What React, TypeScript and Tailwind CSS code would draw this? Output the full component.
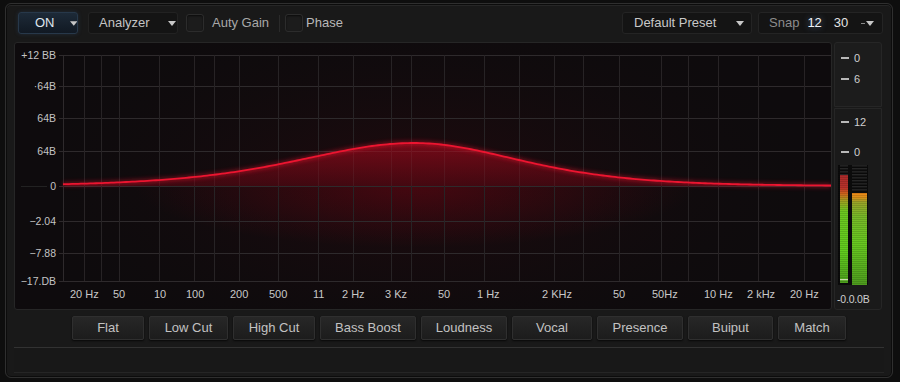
import React from "react";

const FONT = { fontFamily: '"Liberation Sans", Arial, sans-serif' };

function curveY(x: number): number {
  const d = x - 399;
  const w = d < 0 ? 155 : 142;
  const s = 1 / Math.cosh(d / w);
  return 143 - 43 * s * s;
}
function buildCurve(): string {
  let d = "";
  for (let x = 48; x <= 816; x += 3) {
    d += `${x === 48 ? "M" : " L"} ${x} ${curveY(x).toFixed(2)}`;
  }
  d += ` L 816 ${curveY(816).toFixed(2)}`;
  return d;
}
const curveD = buildCurve();
const fillD = `${curveD} L 816 143 L 48 143 Z`;

const hLines = [12, 43, 75, 108, 143, 178, 210, 238];
const yLabels = ["+12 BB", "·64B", "64B", "64B", "0", "−2.04", "−7.88", "−17.DB"];
const vLines = [69, 86, 104, 144, 179, 199, 224, 263, 303, 338, 376, 396, 429, 469, 504, 539, 568, 604, 646, 673, 703, 743, 789];
const fLabels: [string, number][] = [
  ["20 Hz", 55], ["50", 98], ["10", 139], ["100", 171], ["200", 215], ["500", 254],
  ["11", 298], ["2 Hz", 327], ["3 Kz", 370], ["50", 423], ["1 Hz", 462], ["2 KHz", 527],
  ["50", 598], ["50Hz", 637], ["10 Hz", 689], ["2 kHz", 732], ["20 Hz", 775],
];

function Caret({ className = "" }: { className?: string }) {
  return (
    <svg width="8" height="5" viewBox="0 0 8 5" className={className}>
      <path d="M0 0 L8 0 L4 5 Z" fill="#c8c8c8" />
    </svg>
  );
}

function Checkbox() {
  return <div className="w-[18px] h-[18px] rounded-[3px] bg-[#1c1c1c] border border-[#2c2c2c] shadow-[inset_0_1px_2px_rgba(0,0,0,0.6)]" />;
}

function Graph() {
  return (
    <div className="relative w-[818px] h-[268px] rounded-[3px] border border-[#262626] bg-[#0e0b0d] overflow-hidden">
      <svg width="818" height="268" className="absolute left-0 top-0">
        <defs>
          <radialGradient id="bgGlow" cx="400" cy="140" r="420" gradientUnits="userSpaceOnUse" gradientTransform="translate(400 140) scale(1 0.45) translate(-400 -140)">
            <stop offset="0" stopColor="#34090f" stopOpacity="0.5" />
            <stop offset="1" stopColor="#0e0b0d" stopOpacity="0" />
          </radialGradient>
          <linearGradient id="fillG" x1="0" y1="100" x2="0" y2="143" gradientUnits="userSpaceOnUse">
            <stop offset="0" stopColor="#c00a20" stopOpacity="0.55" />
            <stop offset="1" stopColor="#700614" stopOpacity="0.45" />
          </linearGradient>
          <radialGradient id="underGlow" cx="400" cy="143" r="280" gradientUnits="userSpaceOnUse" gradientTransform="translate(400 143) scale(1 0.22) translate(-400 -143)">
            <stop offset="0" stopColor="#6a0512" stopOpacity="0.5" />
            <stop offset="1" stopColor="#6a0512" stopOpacity="0" />
          </radialGradient>
          <filter id="blur" x="-10%" y="-50%" width="120%" height="200%">
            <feGaussianBlur stdDeviation="2" />
          </filter>
        </defs>
        <rect x="48" y="0" width="768" height="268" fill="url(#bgGlow)" />
        <rect x="48" y="143" width="768" height="70" fill="url(#underGlow)" />
        {hLines.map((y) => (
          <line key={y} x1="44" x2="816" y1={y + 0.5} y2={y + 0.5} stroke="#2e2a2c" strokeWidth="1" />
        ))}
        <line x1="6" x2="32" y1="143.5" y2="143.5" stroke="#222" strokeWidth="1" />
        {vLines.map((x) => (
          <line key={x} x1={x + 0.5} x2={x + 0.5} y1="12" y2="238" stroke="#272325" strokeWidth="1" />
        ))}
        <line x1="48.5" x2="48.5" y1="12" y2="238" stroke="#2e2a2c" strokeWidth="1" />
        <line x1="816.5" x2="816.5" y1="0" y2="268" stroke="#2f2f2f" strokeWidth="1" />
        <path d={fillD} fill="url(#fillG)" />
        <path d={curveD} fill="none" stroke="#ff1430" strokeWidth="4" opacity="0.4" filter="url(#blur)" />
        <path d={curveD} fill="none" stroke="#ec1530" strokeWidth="1.8" />
      </svg>
      {yLabels.map((t, i) => (
        <div key={i} className="absolute left-0 w-[41px] text-right text-[10.5px] leading-[14px] text-[#c4c4c4]" style={{ top: hLines[i] - 7 }}>
          {t}
        </div>
      ))}
      {fLabels.map(([t, x], i) => (
        <div key={i} className="absolute top-[244px] text-[11px] leading-[14px] text-[#c8c8c8] whitespace-nowrap" style={{ left: x }}>
          {t}
        </div>
      ))}
    </div>
  );
}

function Tick({ label }: { label: string }) {
  return (
    <div className="h-[14px] flex items-center pl-[6px] gap-[5px]">
      <div className="w-[8px] h-[2px] bg-[#b8b8b8]" />
      <span className="text-[11px] leading-[14px] text-[#cfcfcf]">{label}</span>
    </div>
  );
}

function Meter() {
  const stripes = [];
  for (let y = 0; y < 120; y += 2) stripes.push(y);
  return (
    <svg width="30" height="120" viewBox="0 0 30 120">
      <defs>
        <linearGradient id="mL" x1="0" y1="10" x2="0" y2="118" gradientUnits="userSpaceOnUse">
          <stop offset="0" stopColor="#a82a2a" />
          <stop offset="0.12" stopColor="#b8322a" />
          <stop offset="0.17" stopColor="#d0621c" />
          <stop offset="0.24" stopColor="#a0a020" />
          <stop offset="0.34" stopColor="#6cc820" />
          <stop offset="0.7" stopColor="#62cc1e" />
          <stop offset="1" stopColor="#4c9e1c" />
        </linearGradient>
        <linearGradient id="mR" x1="0" y1="28" x2="0" y2="120" gradientUnits="userSpaceOnUse">
          <stop offset="0" stopColor="#f08a18" />
          <stop offset="0.05" stopColor="#d8901a" />
          <stop offset="0.1" stopColor="#9aa428" />
          <stop offset="0.25" stopColor="#78b828" />
          <stop offset="0.55" stopColor="#68c820" />
          <stop offset="1" stopColor="#4e9c1e" />
        </linearGradient>
      </defs>
      <rect x="0" y="0" width="30" height="120" fill="#0b0b0b" />
      {[0, 3, 6, 9, 12, 15, 18, 21, 24].map((y) => (
        <g key={y}>
          <rect x="2" y={y} width="8" height="1.5" fill="#262626" />
          <rect x="14" y={y} width="15" height="1.5" fill="#262626" />
        </g>
      ))}
      <rect x="2" y="10" width="8" height="108" fill="url(#mL)" />
      <rect x="14" y="28" width="15" height="92" fill="url(#mR)" />
      {stripes.map((y) => (
        <rect key={y} x="0" y={y} width="30" height="0.7" fill="#000" opacity="0.18" />
      ))}
      <rect x="2" y="114" width="8" height="1.2" fill="#e8f0d0" opacity="0.8" />
      <rect x="10" y="0" width="4" height="120" fill="#0b0b0b" />
    </svg>
  );
}

function RightPanel() {
  return (
    <div className="w-[48px] h-[268px] flex flex-col gap-[1px]">
      <div className="h-[65px] rounded-t-[3px] bg-[#1c1c1c] border border-[#262626] pt-[8px] flex flex-col gap-[7px]">
        <Tick label="0" />
        <Tick label="6" />
      </div>
      <div className="flex-1 rounded-b-[3px] bg-[#1a1a1a] border border-[#262626] pt-[6px] flex flex-col">
        <Tick label="12" />
        <div className="mt-[16px]">
          <Tick label="0" />
        </div>
        <div className="mt-[6px] pl-[3px]">
          <Meter />
        </div>
        <div className="mt-[7px] text-[10.5px] leading-[14px] text-[#cfcfcf] pl-[2px] whitespace-nowrap tracking-[-0.2px]">-0.0.0B</div>
      </div>
    </div>
  );
}

const buttons: [string, number][] = [
  ["Flat", 72], ["Low Cut", 79], ["High Cut", 82], ["Bass Boost", 96], ["Loudness", 86],
  ["Vocal", 80], ["Presence", 86], ["Buiput", 85], ["Match", 68],
];

export default function App() {
  return (
    <div className="w-[900px] h-[382px] bg-[#0e0e0e] pt-[3px] pl-[5px] pr-[7px] pb-[4px]" style={FONT}>
      <div className="w-full h-full rounded-[6px] border border-[#2f2f2f] bg-[#191919] shadow-[inset_0_0_0_1px_#0c0c0c,inset_0_1px_0_1px_#262626] flex flex-col">
        {/* toolbar */}
        <div className="flex items-center h-[22px] mt-[8px] pl-[12px] pr-[9px]">
          <div className="w-[60px] h-[22px] rounded-[3px] bg-gradient-to-b from-[#1d2a38] to-[#111923] border border-[#27384a] shadow-[0_0_4px_rgba(60,100,150,0.25)] flex items-center pl-[16px] gap-[15px]">
            <span className="text-[13px] text-[#dfe6ee]">ON</span>
            <Caret />
          </div>
          <div className="ml-[10px] w-[90px] h-[22px] rounded-[3px] bg-[#141414] border border-[#222] flex items-center pl-[10px] gap-[18px]">
            <span className="text-[13px] text-[#c4c4c4]">Analyzer</span>
            <Caret />
          </div>
          <div className="ml-[8px]"><Checkbox /></div>
          <span className="ml-[8px] text-[13px] text-[#a8a8a8]">Auty Gain</span>
          <div className="ml-[10px] w-px h-[17px] bg-[#2a2a2a]" />
          <div className="ml-[5px]"><Checkbox /></div>
          <span className="ml-[3px] text-[13px] text-[#b8b8b8]">Phase</span>
          <div className="flex-1" />
          <div className="w-[130px] h-[22px] rounded-[3px] bg-[#141414] border border-[#242424] flex items-center pl-[11px] gap-[20px]">
            <span className="text-[13px] text-[#c8c8c8]">Default Preset</span>
            <Caret />
          </div>
          <div className="ml-[6px] w-[125px] h-[22px] rounded-[3px] bg-[#141414] border border-[#242424] flex items-center pl-[10px]">
            <span className="text-[13px] text-[#8c8c8c]">Snap</span>
            <span className="ml-[8px] text-[13px] text-[#eef3fa] [text-shadow:0_0_6px_rgba(120,160,220,0.7)]">12</span>
            <span className="ml-[12px] text-[13px] text-[#e4e4e4]">30</span>
            <span className="ml-[13px] w-[4px] h-[1px] bg-[#888]" />
            <Caret className="ml-[1px]" />
          </div>
        </div>
        {/* graph row */}
        <div className="flex mt-[8px] pl-[8px] gap-[2px]">
          <Graph />
          <RightPanel />
        </div>
        {/* buttons */}
        <div className="flex mt-[6px] pl-[66px] gap-[5px]">
          {buttons.map(([t, w]) => (
            <div
              key={t}
              className="h-[24px] rounded-[2px] bg-gradient-to-b from-[#272727] to-[#1c1c1c] border border-[#2f2f2f] shadow-[0_1px_2px_rgba(0,0,0,0.7)] flex items-center justify-center text-[13px] text-[#c2c2c2]"
              style={{ width: w }}
            >
              {t}
            </div>
          ))}
        </div>
        {/* bottom */}
        <div className="mt-[7px] mx-[8px] h-px bg-[#323232]" />
        <div className="flex-1 mx-[8px] mb-[4px] bg-[#181818] border-b border-[#252525]" />
      </div>
    </div>
  );
}
